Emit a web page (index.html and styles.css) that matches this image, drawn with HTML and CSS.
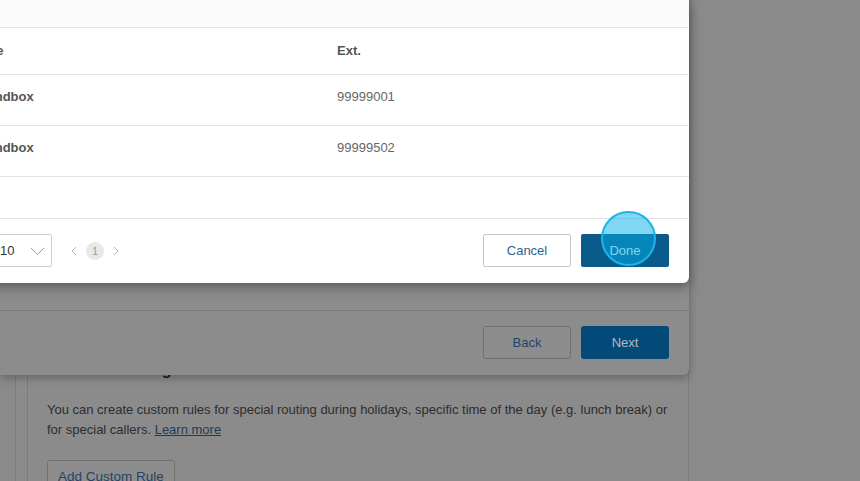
FILE: index.html
```html
<!DOCTYPE html>
<html lang="en">
<head>
<meta charset="utf-8">
<title>Select Extensions</title>
<link rel="stylesheet" href="styles.css">
</head>
<body>
  <div class="page">
    <div class="panel">
      <div class="section">
        <h2 class="section-title">Custom Routing</h2>
        <p class="desc">You can create custom rules for special routing during holidays, specific time of the day (e.g. lunch break) or for special callers. <a class="link" href="#">Learn more</a></p>
        <button class="btn-dim-outline">Add Custom Rule</button>
      </div>
    </div>
  </div>

  <div class="wizard">
    <div class="wizard-body"></div>
    <div class="wizard-footer">
      <button class="btn-dim-outline btn-wide">Back</button>
      <button class="btn-dim-primary btn-wide">Next</button>
    </div>
  </div>

  <div class="modal">
    <div class="modal-top"></div>
    <div class="table">
      <div class="tr th">
        <div class="cell">Name</div>
        <div class="cell">Ext.</div>
      </div>
      <div class="tr">
        <div class="cell name">1 Sandbox</div>
        <div class="cell ext">99999001</div>
      </div>
      <div class="tr">
        <div class="cell name">2 Sandbox</div>
        <div class="cell ext">99999502</div>
      </div>
    </div>
    <div class="modal-spacer"></div>
    <div class="modal-footer">
      <div class="pager">
        <div class="select">
          <span>10</span>
          <svg class="chev" width="15" height="9" viewBox="0 0 15 9"><path d="M1 1 L7.5 7.5 L14 1" fill="none" stroke="#9a9a9a" stroke-width="1"/></svg>
        </div>
        <svg class="arrow prev" width="6" height="10" viewBox="0 0 6 10"><path d="M5 1 L1 5 L5 9" fill="none" stroke="#b5b5b5" stroke-width="1"/></svg>
        <span class="page-num">1</span>
        <svg class="arrow next" width="6" height="10" viewBox="0 0 6 10"><path d="M1 1 L5 5 L1 9" fill="none" stroke="#b5b5b5" stroke-width="1"/></svg>
      </div>
      <div class="actions">
        <button class="btn btn-outline">Cancel</button>
        <button class="btn btn-primary">Done</button>
      </div>
    </div>
  </div>

  <div class="highlight"></div>
</body>
</html>
```

FILE: styles.css
```css
* { box-sizing: border-box; }
html, body {
  margin: 0;
  padding: 0;
  width: 860px;
  height: 481px;
  overflow: hidden;
  background: #898989;
  font-family: "Liberation Sans", Arial, sans-serif;
  font-size: 13px;
}
button { font-family: inherit; cursor: pointer; }

/* dimmed page behind the overlays */
.page {
  padding-top: 300px;
  background: #8a8a8a;
}
.panel {
  margin-left: 15px;
  width: 674px;
  height: 181px;
  border-left: 1px solid #7b7b7b;
  border-right: 1px solid #7b7b7b;
  padding-left: 11px;
  background: #8b8b8b;
}
.section {
  height: 100%;
  border-left: 1px solid #7b7b7b;
  padding: 60px 12px 0 19px;
}
.section-title {
  margin: 0;
  font-size: 16px;
  line-height: 20px;
  font-weight: bold;
  color: #1c1c1c;
}
.desc {
  margin: 20px 0 0;
  line-height: 20px;
  color: #2d2d2d;
}
.link { color: #1d3c58; text-decoration: underline; }
.btn-dim-outline {
  margin: 0;
  height: 33px;
  padding: 0 10px;
  border: 1px solid #6f6f6f;
  border-radius: 3px;
  background: #8d8d8d;
  color: #1f4568;
  font-size: 13px;
}
.section .btn-dim-outline { margin-top: 20px; font-size: 13.5px; }
.btn-dim-primary {
  height: 33px;
  border: none;
  border-radius: 3px;
  background: #034a78;
  color: #b2bac2;
  font-size: 13px;
}
.btn-wide { width: 88px; padding: 0; }

/* wizard dialog (dimmed) */
.wizard {
  position: absolute;
  left: 0;
  top: -100px;
  width: 689px;
  height: 475px;
  background: #8c8c8c;
  border-radius: 0 0 6px 0;
  box-shadow: 0 3px 8px rgba(0, 0, 0, 0.28);
  display: flex;
  flex-direction: column;
}
.wizard-body { flex: 1; }
.wizard-footer {
  height: 65px;
  border-top: 1px solid #7c7c7c;
  padding: 15px 20px 0;
  display: flex;
  justify-content: flex-end;
  gap: 10px;
}

/* front modal */
.modal {
  position: absolute;
  left: -400px;
  top: 0;
  width: 1089px;
  height: 283px;
  background: #fff;
  border-radius: 0 0 6px 0;
  box-shadow: 0 4px 12px rgba(0, 0, 0, 0.35);
  display: flex;
  flex-direction: column;
}
.modal-top {
  height: 28px;
  background: #fafafa;
  border-bottom: 1px solid #e3e3e3;
}
.tr {
  display: grid;
  grid-template-columns: 369px 1fr;
  padding-left: 368px;
  height: 51px;
  border-bottom: 1px solid #e2e2e2;
  align-items: center;
  color: #666;
}
.tr.th { height: 47px; font-weight: bold; color: #555; padding-bottom: 2px; }
.cell.name { font-weight: bold; color: #555; padding-bottom: 7px; }
.cell.ext { color: #666; padding-bottom: 7px; }
.modal-spacer { flex: 1; }
.modal-footer {
  height: 65px;
  border-top: 1px solid #e2e2e2;
  padding: 15px 20px 0 386px;
  display: flex;
  justify-content: space-between;
}
.pager { display: flex; align-items: center; height: 33px; }
.select {
  width: 66px;
  height: 33px;
  border: 1px solid #cfcfcf;
  border-radius: 2px;
  display: flex;
  align-items: center;
  padding-left: 13px;
  gap: 16px;
  color: #333;
  font-size: 13px;
}
.chev { margin-top: 1px; }
.arrow { display: block; }
.arrow.prev { margin-left: 19px; }
.page-num {
  width: 18px;
  height: 18px;
  border-radius: 50%;
  background: #e8e8e8;
  color: #9c9c9c;
  font-size: 11px;
  display: flex;
  align-items: center;
  justify-content: center;
  margin: 0 9px;
}
.actions { display: flex; gap: 10px; }
.btn {
  width: 88px;
  height: 33px;
  padding: 0;
  border-radius: 2px;
  font-size: 13px;
}
.btn-outline {
  background: #fff;
  border: 1px solid #c6c6c6;
  color: #2f6190;
}
.btn-primary {
  background: #0a5a8c;
  border: none;
  color: #fff;
}

/* click highlight */
.highlight {
  position: absolute;
  left: 601px;
  top: 211px;
  width: 55px;
  height: 55px;
  border-radius: 50%;
  border: 2px solid #1eb3e6;
  background: rgba(0, 176, 232, 0.5);
}
```
